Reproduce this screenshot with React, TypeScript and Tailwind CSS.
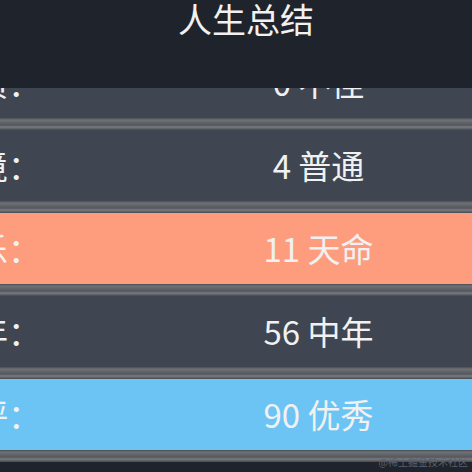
const rows = [
  { label: "体质：", value: "0 不佳", tone: "bg-[#3f4652]" },
  { label: "家境：", value: "4 普通", tone: "bg-[#3f4652]" },
  { label: "快乐：", value: "11 天命", tone: "bg-[#fe9d7e]" },
  { label: "享年：", value: "56 中年", tone: "bg-[#3f4652]" },
  { label: "总评：", value: "90 优秀", tone: "bg-[#6cc4f4]" },
];

function Divider() {
  return (
    <div className="h-[12px] bg-[linear-gradient(to_bottom,#4b4e54_0%,#6e7176_18%,#5c5f64_45%,#55585d_60%,#7a7c81_75%,#45484e_100%)]" />
  );
}

export default function App() {
  return (
    <div
      className="relative h-[472px] w-[472px] overflow-hidden bg-[#1f232b] text-[33px] text-[#f1f1f1]"
      style={{ fontFamily: '"Noto Sans CJK SC", "Noto Sans", sans-serif' }}
    >
      {/* header sits over the scrolled list */}
      <header className="relative z-10 h-[88px] bg-[#1f232b]">
        <h1 className="pl-[20px] text-center text-[34px] leading-[37px]">人生总结</h1>
      </header>

      <div className="-mt-[41px]">
        {rows.map((row) => (
          <div key={row.label}>
            <div className={`flex h-[71px] items-center ${row.tone}`}>
              <span className="-ml-[58px] w-[99px] shrink-0 whitespace-nowrap">{row.label}</span>
              <span className="flex-1 whitespace-nowrap pl-[124px] text-center">{row.value}</span>
            </div>
            <Divider />
          </div>
        ))}
      </div>

      <span className="absolute bottom-[3px] right-[4px] text-[10px] text-[#5d616a]">@稀土掘金技术社区</span>
    </div>
  );
}
